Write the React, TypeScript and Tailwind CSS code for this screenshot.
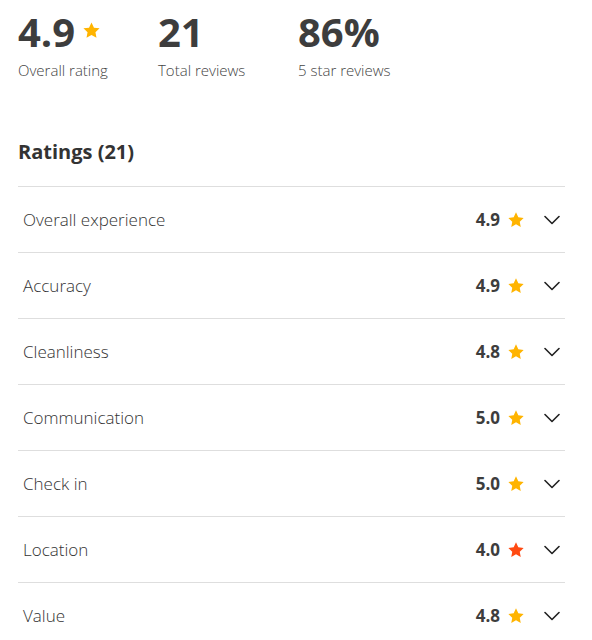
import React from "react";

const stats = [
  { value: "4.9", label: "Overall rating", star: true },
  { value: "21", label: "Total reviews", star: false },
  { value: "86%", label: "5 star reviews", star: false },
];

const ratings = [
  { name: "Overall experience", score: "4.9", low: false },
  { name: "Accuracy", score: "4.9", low: false },
  { name: "Cleanliness", score: "4.8", low: false },
  { name: "Communication", score: "5.0", low: false },
  { name: "Check in", score: "5.0", low: false },
  { name: "Location", score: "4.0", low: true },
  { name: "Value", score: "4.8", low: false },
];

function Star({ className }: { className: string }) {
  return (
    <svg viewBox="0 0 24 24" className={className} fill="currentColor">
      <path d="M12 1.8l3.1 6.6 7.1.9-5.2 4.9 1.3 7.1L12 17.8l-6.3 3.5 1.3-7.1-5.2-4.9 7.1-.9z" />
    </svg>
  );
}

function Chevron() {
  return (
    <svg viewBox="0 0 16 10" className="h-[10px] w-[16px] text-[#222]" fill="none">
      <path d="M1 1.5l7 7 7-7" stroke="currentColor" strokeWidth="1.6" strokeLinecap="round" strokeLinejoin="round" />
    </svg>
  );
}

export default function App() {
  return (
    <div className="min-h-[640px] bg-white px-[18px] pt-[7px] font-['Open_Sans',Arial,sans-serif]">
      <div className="flex">
        {stats.map((s) => (
          <div key={s.label} className="w-[140px]">
            <div className="flex items-center gap-[7px]">
              <span className="text-[40px] font-bold leading-[50px] text-[#3d3d3d]">{s.value}</span>
              {s.star && <Star className="mb-[4px] h-[19px] w-[19px] text-[#ffb400]" />}
            </div>
            <div className="mt-[4px] text-[15px] font-light leading-[18px] text-[#444]">{s.label}</div>
          </div>
        ))}
      </div>

      <h2 className="mt-[60px] text-[20px] font-bold leading-[26px] text-[#333]">Ratings (21)</h2>

      <div className="mt-[21px] w-[547px] border-t border-[#dedede]">
        {ratings.map((r) => (
          <div
            key={r.name}
            className="flex h-[66px] items-center border-b border-[#dedede] pl-[5px] pr-[5px] last:border-b-0"
          >
            <span className="flex-1 text-[17px] font-light text-[#333]">{r.name}</span>
            <span className="text-[17px] font-bold text-[#3d3d3d]">{r.score}</span>
            <Star className={`ml-[7px] h-[18px] w-[18px] ${r.low ? "text-[#ff4a12]" : "text-[#ffb400]"}`} />
            <span className="ml-[19px] flex items-center">
              <Chevron />
            </span>
          </div>
        ))}
      </div>
    </div>
  );
}
